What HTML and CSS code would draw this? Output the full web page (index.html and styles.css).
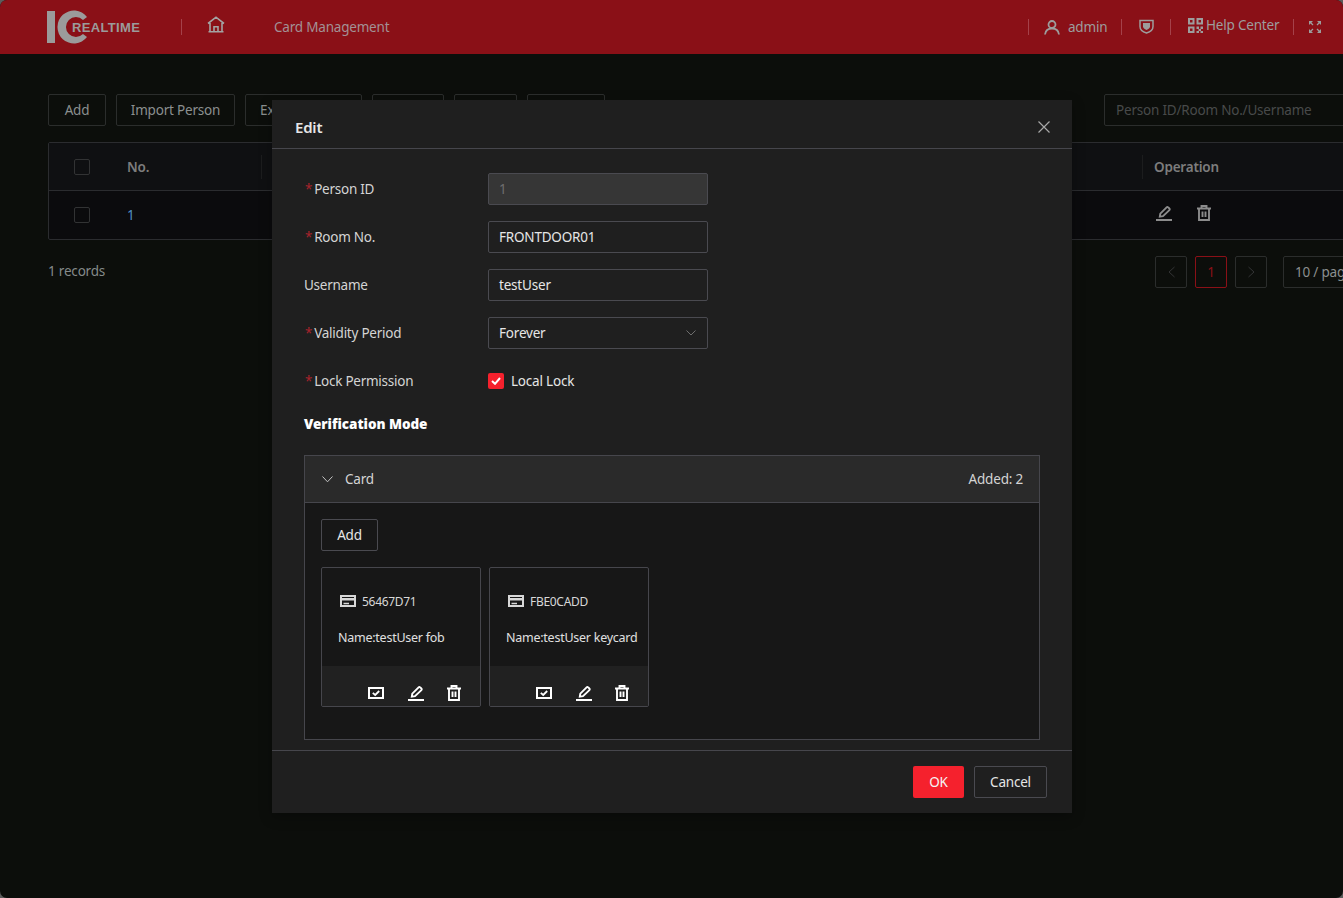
FILE: index.html
```html
<!DOCTYPE html>
<html lang="en">
<head>
    <meta charset="UTF-8">
    <meta name="viewport" content="width=device-width, initial-scale=1.0">
    <title>Card Management</title>
    <link rel="stylesheet" href="styles.css">
</head>
<body>
    <svg class="sprites" width="0" height="0">
        <symbol id="i-edit" viewBox="0 0 16 16">
            <path d="M0 15h16M3.800 11.700l.5-3L10.600 2.300a1.100 1.100 0 0 1 1.600 0l1.200 1.200a1.100 1.100 0 0 1 0 1.600L7 11.200z" fill="none" stroke="currentColor" stroke-width="1.900"/>
        </symbol>
        <symbol id="i-trash" viewBox="0 0 14 16">
            <path d="M0 3.500h14M2 3.500V15h10V3.500M4.500 3.500V1h5v2.500M5.500 6.500v5.500M8.500 6.500v5.500" fill="none" stroke="currentColor" stroke-width="1.900"/>
        </symbol>
        <symbol id="i-check" viewBox="0 0 16 12">
            <path d="M1 1h14v10H1z" fill="none" stroke="currentColor" stroke-width="2"/>
            <path d="M4.800 5.800l2.400 2.200L11.200 4" fill="none" stroke="currentColor" stroke-width="1.800"/>
        </symbol>
        <symbol id="i-card" viewBox="0 0 16 12">
            <path d="M1 1h14v10H1z" fill="none" stroke="currentColor" stroke-width="2"/>
            <path d="M1 3h14v2.600H1zM3.500 7.800H9v1.400H3.500z" fill="currentColor"/>
        </symbol>
    </svg>

    <header class="topbar">
        <div class="logo">
            <svg width="42" height="34" viewBox="0 0 42 34">
                <rect x="0" y="1" width="8" height="32" fill="#9b9b9b"/>
                <path d="M40 6.900A16.500 16.500 0 1 0 40 27.100L36 24.100A10 10 0 1 1 36 9.900z" fill="#9b9b9b"/>
            </svg>
            <span class="logo-text">REALTIME</span>
        </div>
        <span class="sep sep-logo"></span>
        <svg class="home" width="18" height="17" viewBox="0 0 18 17">
            <path d="M1 7.500L9 1.200l8 6.300M3 7v8.800h12V7M7 15.800v-5h4v5M1.500 15.800h15" fill="none" stroke="currentColor" stroke-width="1.600"/>
        </svg>
        <span class="crumb">Card Management</span>

        <div class="top-right">
            <span class="sep"></span>
            <div class="top-item user">
                <svg width="16" height="15" viewBox="0 0 16 15">
                    <circle cx="8" cy="4.500" r="3.500" fill="none" stroke="currentColor" stroke-width="1.800"/>
                    <path d="M1 14.500c.5-4 3-6 7-6s6.500 2 7 6" fill="none" stroke="currentColor" stroke-width="1.800"/>
                </svg>
                <span>admin</span>
            </div>
            <span class="sep"></span>
            <svg class="shield" width="15" height="15" viewBox="0 0 15 15">
                <path d="M1 1.500h13v6c0 3.500-3 5.500-6.500 6.500C4 13 1 11 1 7.500z" fill="none" stroke="currentColor" stroke-width="1.500"/>
                <path d="M4 4h7v3.500c0 1.500-1.500 2.800-3.500 3.500C5.500 10.300 4 9 4 7.500z" fill="currentColor"/>
            </svg>
            <span class="sep"></span>
            <div class="top-item help">
                <svg width="15" height="15" viewBox="0 0 15 15" fill="currentColor">
                    <path d="M0 0h6.500v6.500H0zM2 2v2.500h2.500V2zM8.500 0H15v6.500H8.500zM10.500 2v2.500H13V2zM0 8.500h6.500V15H0zM2 10.500V13h2.500v-2.500z" fill-rule="evenodd"/>
                    <path d="M8.500 8.500h2.500V11H8.500zM12.500 8.500H15V11h-2.500zM10.500 11H13v2h-2.500zM8.500 13H11v2H8.500zM12.500 13H15v2h-2.500z"/>
                </svg>
                <span>Help Center</span>
            </div>
            <span class="sep"></span>
            <svg class="expand" width="12" height="12" viewBox="0 0 12 12">
                <path d="M0 0h4L0 4zM12 0v4L8 0zM0 12V8l4 4zM12 12H8l4-4z" fill="currentColor"/>
                <path d="M1 1l3 3M11 1L8 4M1 11l3-3M11 11L8 8" stroke="currentColor" stroke-width="1.300"/>
            </svg>
        </div>
    </header>

    <main class="content">
        <div class="toolbar">
            <button class="btn w-add">Add</button>
            <button class="btn w-import">Import Person</button>
            <button class="btn w-export">Export Person</button>
            <button class="btn w-72">Delete</button>
            <button class="btn w-63">Clear</button>
            <button class="btn w-78">Refresh</button>
            <div class="search">Person ID/Room No./Username</div>
        </div>

        <div class="grid">
            <div class="grid-row grid-head">
                <div class="cell-check"><span class="box"></span></div>
                <div class="cell-no">No.</div>
                <div class="cell-mid"></div>
                <div class="cell-op">Operation</div>
            </div>
            <div class="grid-row">
                <div class="cell-check"><span class="box"></span></div>
                <div class="cell-no link">1</div>
                <div class="cell-mid"></div>
                <div class="cell-op icons">
                    <svg width="16" height="16"><use href="#i-edit"/></svg>
                    <svg width="14" height="16"><use href="#i-trash"/></svg>
                </div>
            </div>
        </div>

        <div class="list-foot">
            <span class="records">1 records</span>
            <div class="pager">
                <span class="page-btn">
                    <svg width="7" height="12" viewBox="0 0 7 12"><path d="M6.500 1L1 6l5.500 5" fill="none" stroke="currentColor"/></svg>
                </span>
                <span class="page-btn current">1</span>
                <span class="page-btn">
                    <svg width="7" height="12" viewBox="0 0 7 12"><path d="M.5 1L6 6l-5.500 5" fill="none" stroke="currentColor"/></svg>
                </span>
                <span class="page-size">10 / page</span>
            </div>
        </div>
    </main>

    <section class="modal">
        <div class="modal-head">
            <h2>Edit</h2>
            <svg width="12" height="12" viewBox="0 0 12 12"><path d="M.5.5l11 11M11.500.5l-11 11" stroke="#a8a8a8" stroke-width="1.200"/></svg>
        </div>

        <div class="modal-body">
            <form class="edit-form" autocomplete="off">
                <div class="form-row">
                    <label class="req">Person ID</label>
                    <div class="field disabled">1</div>
                </div>
                <div class="form-row">
                    <label class="req">Room No.</label>
                    <div class="field">FRONTDOOR01</div>
                </div>
                <div class="form-row">
                    <label>Username</label>
                    <div class="field">testUser</div>
                </div>
                <div class="form-row">
                    <label class="req">Validity Period</label>
                    <div class="field select">
                        Forever
                        <svg width="10" height="6" viewBox="0 0 10 6"><path d="M.5.500L5 5 9.500.500" fill="none" stroke="#6e6e6e"/></svg>
                    </div>
                </div>
                <div class="form-row">
                    <label class="req">Lock Permission</label>
                    <div class="check-wrap">
                        <span class="tick">
                            <svg width="10" height="8" viewBox="0 0 10 8"><path d="M1 4l3 2.800L9 1" fill="none" stroke="#fff" stroke-width="2"/></svg>
                        </span>
                        Local Lock
                    </div>
                </div>
            </form>

            <h3>Verification Mode</h3>

            <div class="panel">
                <div class="panel-head">
                    <svg width="11" height="7" viewBox="0 0 11 7"><path d="M.5.500L5.500 5.800 10.500.500" fill="none" stroke="#c4c4c4"/></svg>
                    <span class="panel-title">Card</span>
                    <span class="panel-count">Added: 2</span>
                </div>
                <div class="panel-body">
                    <button class="btn-add">Add</button>
                    <div class="cards">
                        <div class="card">
                            <div class="card-main">
                                <div class="card-no">
                                    <svg width="16" height="12"><use href="#i-card"/></svg>
                                    56467D71
                                </div>
                                <div class="card-name">Name:testUser fob</div>
                            </div>
                            <div class="card-actions">
                                <svg width="16" height="12"><use href="#i-check"/></svg>
                                <svg width="16" height="16"><use href="#i-edit"/></svg>
                                <svg width="14" height="16"><use href="#i-trash"/></svg>
                            </div>
                        </div>
                        <div class="card">
                            <div class="card-main">
                                <div class="card-no">
                                    <svg width="16" height="12"><use href="#i-card"/></svg>
                                    FBE0CADD
                                </div>
                                <div class="card-name">Name:testUser keycard</div>
                            </div>
                            <div class="card-actions">
                                <svg width="16" height="12"><use href="#i-check"/></svg>
                                <svg width="16" height="16"><use href="#i-edit"/></svg>
                                <svg width="14" height="16"><use href="#i-trash"/></svg>
                            </div>
                        </div>
                    </div>
                </div>
            </div>
        </div>

        <div class="modal-foot">
            <button class="btn-ok">OK</button>
            <button class="btn-cancel">Cancel</button>
        </div>
    </section>
</body>
</html>
```

FILE: styles.css
```css
* {
    box-sizing: border-box;
}
html, body {
    margin: 0;
    height: 898px;
    overflow: hidden;
}
html {
    background-color: #5c5c5c;
}
body {
    position: relative;
    border-radius: 7px;
    background-color: #0c0e0b;
    font-family: "Noto Sans", "Liberation Sans", Arial, sans-serif;
    font-size: 13.5px;
    letter-spacing: -.2px;
    color: #e6e6e6;
}
.sprites {
    position: absolute;
}
button {
    font: inherit;
    letter-spacing: inherit;
    cursor: pointer;
}

/* top bar */
.topbar {
    height: 54px;
    background-color: #8a1017;
    display: flex;
    align-items: center;
    padding-left: 47px;
    color: #a39095;
}
.logo {
    position: relative;
    width: 94px;
    height: 34px;
    display: flex;
    align-items: center;
}
.logo-text {
    position: absolute;
    left: 25px;
    top: 10px;
    font-family: "Liberation Sans", Arial, sans-serif;
    font-size: 13px;
    font-weight: 700;
    letter-spacing: .35px;
    color: #9b9b9b;
}
.sep {
    width: 1px;
    height: 16px;
    background-color: #a5414a;
}
.sep-logo {
    margin-left: 40px;
}
.home {
    margin: -6px 0 0 25px;
    color: #a3a3a3;
}
.crumb {
    margin-left: 49px;
}
.top-right {
    margin-left: auto;
    width: 315px;
    flex: none;
    display: flex;
    align-items: center;
    color: #9d9d9d;
}
.top-item {
    display: flex;
    align-items: center;
}
.user {
    margin-left: 15px;
    gap: 8px;
    width: 77px;
}
.shield {
    margin: -2px 16px 0 17px;
}
.help {
    margin: -4px 13px 0 17px;
    gap: 3px;
    width: 92px;
    white-space: nowrap;
}
.expand {
    margin: -1px 0 0 15px;
}

/* page behind the dialog */
.content {
    padding: 40px 0 0 48px;
    width: 1400px;
}
.toolbar {
    display: flex;
    gap: 10px;
    width: 1306px;
    height: 32px;
}
.btn {
    height: 32px;
    padding: 0;
    background: transparent;
    border: 1px solid #2b2d2c;
    border-radius: 2px;
    color: #8b8f8f;
    white-space: nowrap;
}
.w-add { width: 58px; }
.w-import { width: 119px; }
.w-export { width: 117px; }
.w-72 { width: 72px; }
.w-63 { width: 63px; }
.w-78 { width: 78px; }
.search {
    margin-left: auto;
    width: 250px;
    padding-left: 11px;
    line-height: 30px;
    border: 1px solid #2b2d2c;
    border-radius: 2px;
    color: #484a4a;
}
.grid {
    width: 1352px;
    margin-top: 16px;
    border: 1px solid #2b2c2f;
    border-radius: 2px;
    background-color: #0b0b0d;
}
.grid-row {
    display: flex;
    align-items: center;
    height: 48px;
}
.grid-head {
    height: 48px;
    background-color: #0f1012;
    border-bottom: 1px solid #2b2c2f;
    font-weight: 600;
    color: #7d7d7d;
}
.cell-check {
    width: 67px;
    padding-left: 25px;
    display: flex;
}
.box {
    width: 16px;
    height: 16px;
    border: 1px solid #323334;
    border-radius: 2px;
}
.cell-no {
    width: 146px;
    padding-left: 11px;
}
.link {
    color: #4f8fc0;
}
.cell-mid {
    width: 880px;
}
.cell-op {
    padding-left: 11px;
    height: 24px;
    line-height: 24px;
    border-left: 1px solid #1c1d1e;
}
.grid-head .cell-no {
    height: 24px;
    line-height: 24px;
    border-right: 1px solid #1c1d1e;
}
.icons {
    border-left-color: transparent;
    padding-left: 13px;
    padding-bottom: 4px;
    display: flex;
    align-items: center;
    gap: 25px;
    color: #8c8c8c;
}
.list-foot {
    width: 1352px;
    margin-top: 16px;
    display: flex;
    justify-content: space-between;
    align-items: center;
    height: 32px;
}
.records {
    margin-top: -2px;
    color: #858a8a;
}
.pager {
    display: flex;
    align-items: center;
    gap: 8px;
    width: 245px;
    color: #343536;
}
.page-btn {
    width: 32px;
    height: 32px;
    border: 1px solid #2b2d2c;
    border-radius: 2px;
    display: flex;
    align-items: center;
    justify-content: center;
}
.page-btn.current {
    border-color: #8a1017;
    color: #8a1017;
}
.page-size {
    margin-left: 8px;
    width: 90px;
    height: 32px;
    padding-left: 11px;
    line-height: 30px;
    border: 1px solid #2b2d2c;
    border-radius: 2px;
    color: #8b8f8f;
    white-space: nowrap;
}

/* dialog */
.modal {
    position: absolute;
    left: 272px;
    top: 100px;
    width: 800px;
    height: 713px;
    background-color: #1f1f1f;
    box-shadow: 0 4px 12px rgba(0, 0, 0, .3);
    display: flex;
    flex-direction: column;
}
.modal-head {
    height: 49px;
    flex: none;
    padding: 6px 22px 0 23px;
    border-bottom: 1px solid #46464c;
    display: flex;
    align-items: center;
    justify-content: space-between;
}
.modal-head h2 {
    margin: 0;
    font-size: 15px;
    font-weight: 600;
    color: #e6e6e6;
}
.modal-body {
    flex: 1;
    padding: 24px 32px 0;
}
.edit-form {
    display: flex;
    flex-direction: column;
    gap: 16px;
}
.form-row {
    display: flex;
    align-items: center;
    height: 32px;
}
.form-row label {
    width: 184px;
    letter-spacing: -.25px;
    color: #d4d4d4;
}
.req::before {
    content: "*";
    color: #a8232c;
    margin: 0 2px 0 1px;
}
.field {
    width: 220px;
    height: 32px;
    padding-left: 10px;
    line-height: 30px;
    border: 1px solid #4a4a50;
    border-radius: 2px;
    color: #e6e6e6;
}
.field.disabled {
    background-color: #363636;
    color: #6e6e6e;
}
.field.select {
    position: relative;
}
.field.select svg {
    position: absolute;
    right: 11px;
    top: 12px;
}
.check-wrap {
    display: flex;
    align-items: center;
    gap: 7px;
}
.tick {
    width: 16px;
    height: 16px;
    border-radius: 2px;
    background-color: #f5212d;
    display: flex;
    align-items: center;
    justify-content: center;
}
.modal-body h3 {
    margin: 17px 0 21px;
    height: 20px;
    line-height: 20px;
    font-size: 13.5px;
    font-weight: 900;
    letter-spacing: -.05px;
    color: #fff;
}
.panel {
    width: 736px;
    height: 285px;
    border: 1px solid #46464c;
    background-color: #171717;
}
.panel-head {
    height: 47px;
    padding: 0 16px 0 17px;
    background-color: #2a2a2a;
    border-bottom: 1px solid #46464c;
    display: flex;
    align-items: center;
}
.panel-title {
    margin-left: 12px;
    color: #d4d4d4;
}
.panel-count {
    margin-left: auto;
    color: #d4d4d4;
}
.panel-body {
    padding: 16px;
}
.btn-add {
    width: 57px;
    height: 32px;
    background: transparent;
    border: 1px solid #4a4a50;
    border-radius: 2px;
    color: #e6e6e6;
    padding: 0;
}
.cards {
    display: flex;
    gap: 8px;
    margin-top: 16px;
}
.card {
    width: 160px;
    height: 140px;
    border: 1px solid #46464c;
    border-radius: 2px;
    display: flex;
    flex-direction: column;
}
.card-main {
    height: 98px;
    padding: 25px 16px 0;
    font-size: 12.5px;
}
.card-no {
    display: flex;
    align-items: center;
    gap: 6px;
    height: 16px;
    padding-left: 2px;
    font-size: 12px;
    letter-spacing: -.3px;
    color: #d8d8d8;
}
.card-name {
    margin-top: 20px;
    white-space: nowrap;
    letter-spacing: -.25px;
    color: #e0e0e0;
}
.card-actions {
    flex: 1;
    background-color: #212121;
    padding: 18px 19px 5px 46px;
    display: flex;
    justify-content: space-between;
    align-items: center;
    color: #fff;
}
.modal-foot {
    height: 63px;
    flex: none;
    border-top: 1px solid #46464c;
    padding: 15px 25px 0 0;
    display: flex;
    justify-content: flex-end;
    gap: 10px;
}
.btn-ok {
    width: 51px;
    height: 32px;
    padding: 0;
    background-color: #f5212d;
    border: none;
    border-radius: 2px;
    color: #f5f5f5;
}
.btn-cancel {
    width: 73px;
    height: 32px;
    padding: 0;
    background: transparent;
    border: 1px solid #4a4a50;
    border-radius: 2px;
    color: #e6e6e6;
}
```
